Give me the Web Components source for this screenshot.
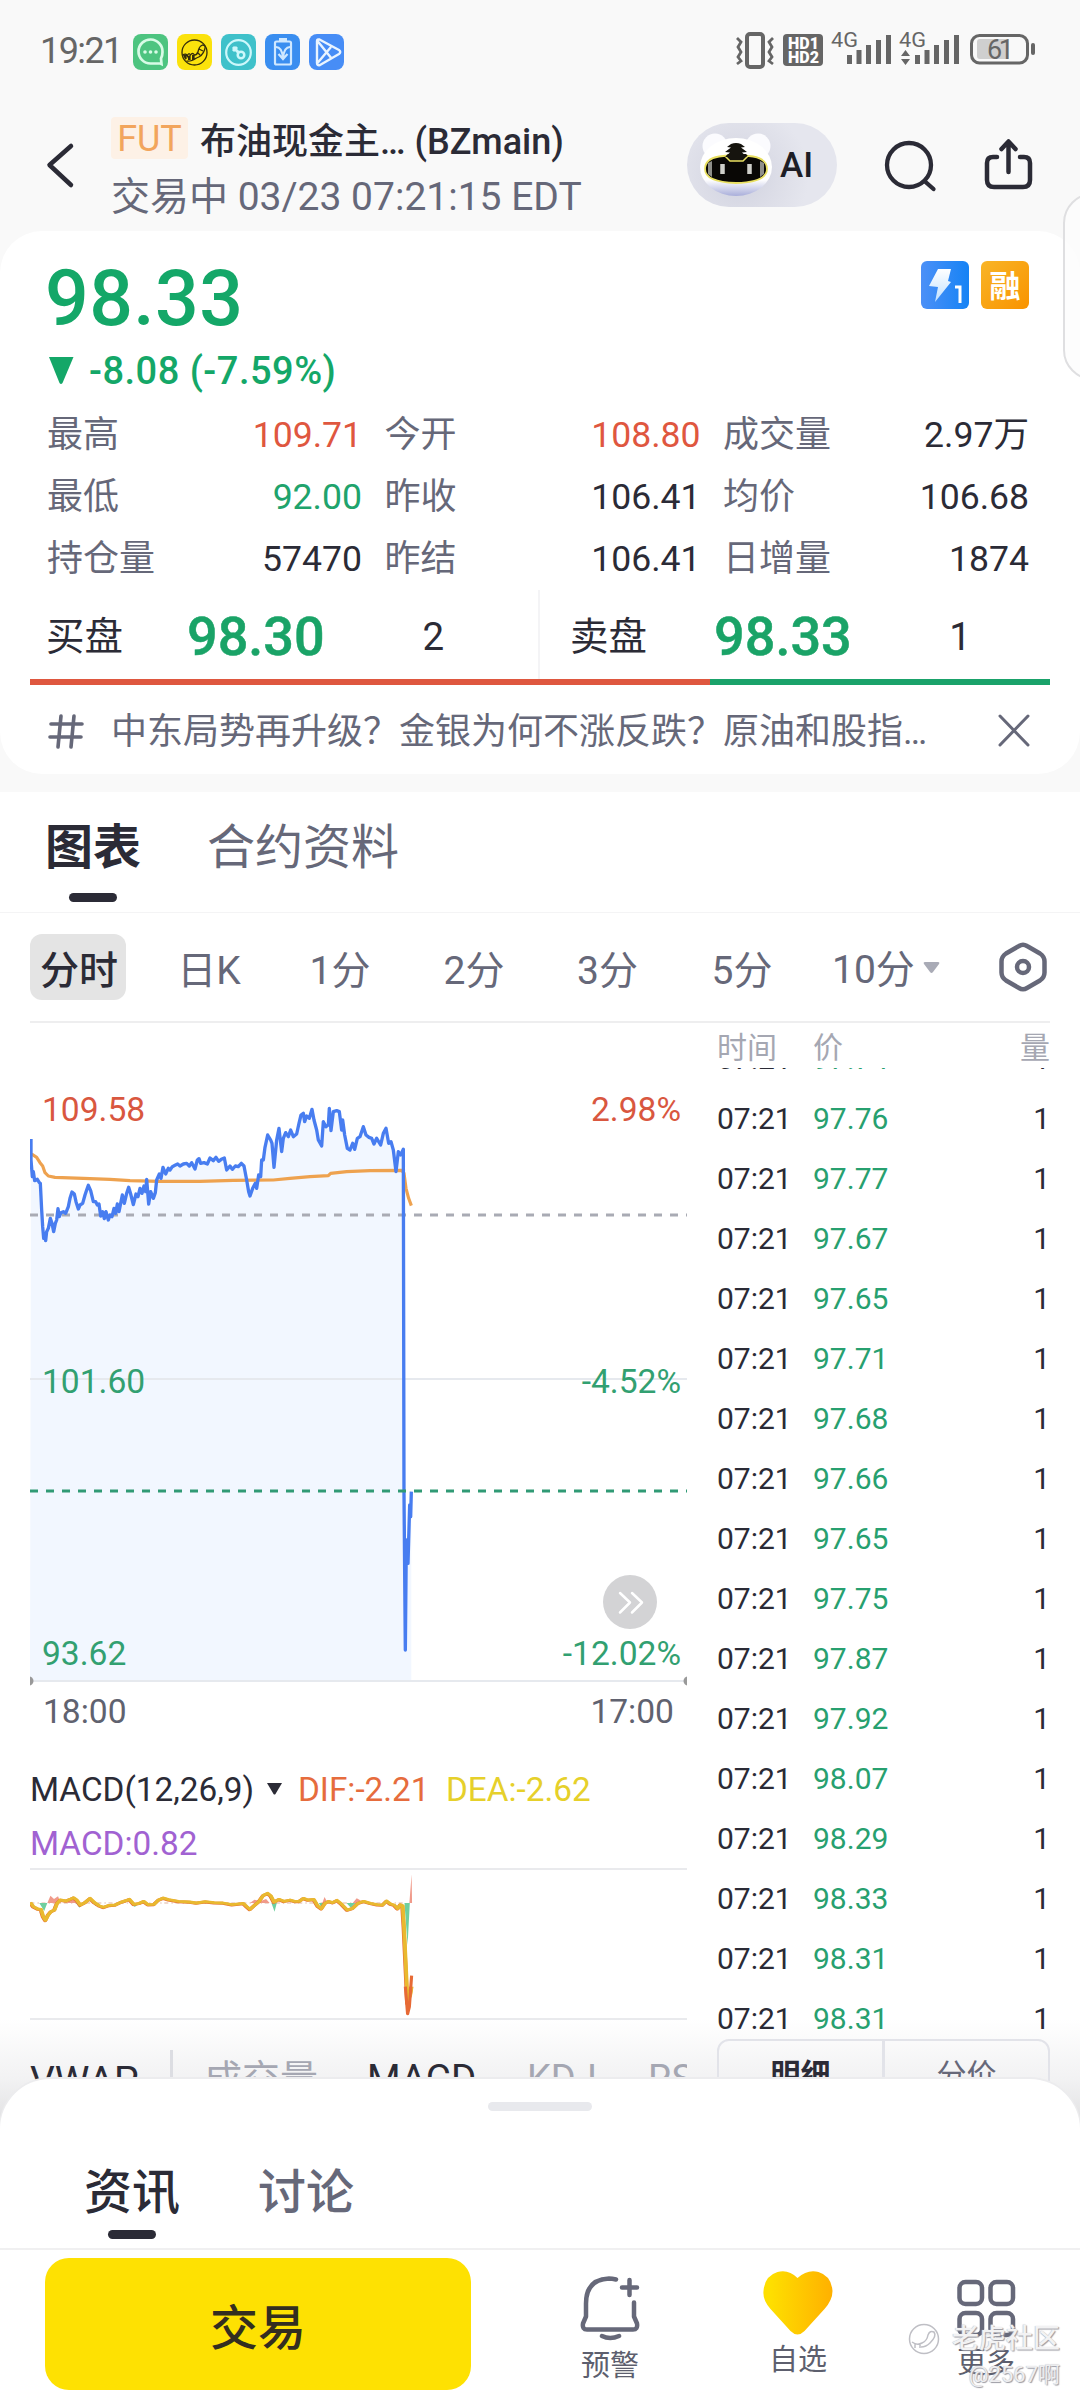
<!DOCTYPE html>
<html lang="zh-CN">
<head>
<meta charset="utf-8">
<title>布油现金主… (BZmain)</title>
<style>
html,body{margin:0;padding:0;background:#fff}
body{width:1080px;height:2400px;overflow:hidden;font-family:Roboto,"Noto Sans CJK SC",sans-serif;color:#2b2b36}
</style>
</head>
<body>
<quote-app></quote-app>
<script>
const define=(name,css,html)=>customElements.define(name,class extends HTMLElement{
  constructor(){
    super();
    const root=this.attachShadow({mode:'open'});
    root.innerHTML=`<style>:host{display:block;box-sizing:border-box}*{box-sizing:border-box}svg{display:block;flex:none}${css}</style>`+(typeof html==='function'?html(this):html);
  }
});

define('status-bar',`
:host{height:100px;display:flex;justify-content:space-between;padding:0 38px 0 40px}
.l{display:flex;padding-top:34px;gap:9px}
.time{font-size:36px;line-height:35px;letter-spacing:-1.6px;color:#666;width:84px;font-weight:400}
.r{margin-top:24px}
text{font-family:Roboto,sans-serif}`,`
<div class="l"><span class="time">19:21</span>
<svg width="35" height="36"><rect width="35" height="36" rx="8" fill="#4dc480"/><path d="M27.5 29.5H17.5A12 12 0 1 1 29.5 18Q29.500 22 28 24.500L28.500 30Z" fill="none" stroke="#d8fbe6" stroke-width="2.700"/><g fill="#d8fbe6"><circle cx="12" cy="18" r="1.800"/><circle cx="17.500" cy="18" r="1.800"/><circle cx="23" cy="18" r="1.800"/></g></svg>
<svg width="35" height="36"><rect width="35" height="36" rx="8" fill="#fbe20c"/><g fill="none" stroke="#342d0c" stroke-width="1.300"><circle cx="17.500" cy="18.500" r="12.500"/><path d="M5.500 21q4-2 5 1 1-4 3-1 2-3 4 0 3 0 4-5 1-4 4-5 4 0 2 5-2 6-8 8-6 4-10 3M9 21v4M13 21v5M17 21v5M20 18l3 3M22 15l4 2"/></g><path d="M6 21h3v5q-2-2-3-5zM11 22h2v4h-2zM15 21h2v5h-2z" fill="#342d0c"/></svg>
<svg width="35" height="36"><rect width="35" height="36" rx="8" fill="#3fc1ca"/><g fill="none" stroke="#cdf8fb" stroke-width="2.200"><circle cx="17.500" cy="18.500" r="12.300"/><circle cx="20" cy="21" r="3.300" stroke-width="2.500"/><path d="M17.500 18.500L12 13M12 17l4-4" stroke-width="3"/></g></svg>
<svg width="35" height="36"><rect width="35" height="36" rx="8" fill="#3a8ef0"/><rect x="10" y="7.500" width="16" height="23" rx="1.500" fill="none" stroke="#cfe8ff" stroke-width="2.200"/><path d="M14 5.500h8" stroke="#cfe8ff" stroke-width="3"/><path d="M11 13q6 0 7 11M25 13q-6 0-7 11M13.500 20l4.500 5 4.500-5" fill="none" stroke="#cfe8ff" stroke-width="2.200"/></svg>
<svg width="35" height="36"><rect width="35" height="36" rx="8" fill="#478df6"/><path d="M8 7q0-2 2.500-1.500L30 16q2.500 2 0 4L11 31q-3 1-3-2ZM8.500 29L22 13M8.500 7L23 25" fill="none" stroke="#eaf4ff" stroke-width="2.400" stroke-linejoin="round"/></svg>
</div>
<svg class="r" width="312" height="50" viewBox="730 24 312 50" fill="#666">
<rect x="747" y="34" width="16" height="33" rx="3" fill="none" stroke="#666" stroke-width="4"/>
<path d="M737 38l4 4-3 5 3 5-3 5 3 4-4 3M773 38l-4 4 3 5-3 5 3 5-3 4 4 3" fill="none" stroke="#666" stroke-width="2.800"/>
<rect x="783" y="34" width="40" height="32" rx="4"/>
<g fill="#fff" font-size="16" font-weight="900"><text x="788" y="49" textLength="31">HD1</text><text x="788" y="63" textLength="31">HD2</text></g>
<text x="831" y="47" font-size="20" textLength="27" lengthAdjust="spacingAndGlyphs">4G</text>
<path d="M847 55h5v9h-5zM856.500 50h5v14h-5zM866 45h5v19h-5zM876 40h5v24h-5zM886 35h5v29h-5z"/>
<text x="899" y="47" font-size="20" textLength="27" lengthAdjust="spacingAndGlyphs">4G</text>
<path d="M905.500 50l4.500 6h-9zM905.500 65l4.500-6h-9z"/>
<path d="M915 55h5v9h-5zM924.500 50h5v14h-5zM934 45h5v19h-5zM944 40h5v24h-5zM954 35h5v29h-5z"/>
<rect x="971.500" y="35.500" width="56" height="27.500" rx="8" fill="none" stroke="#666" stroke-width="3"/>
<path d="M980 39h29v20h-29q-3 0-3-3V42q0-3 3-3z" fill="#cfcfcf"/>
<rect x="1031" y="43" width="4" height="12" rx="2"/>
<text x="987" y="58.500" font-size="27" textLength="27" lengthAdjust="spacing">61</text>
</svg>`);

define('quote-header',`
:host{height:131px;display:flex;position:relative}
.back{margin:40px 0 0 44px}
.info{margin-left:35px;padding-top:17px;width:540px}
.t{display:flex;align-items:center;height:48px;gap:12px;white-space:nowrap}
.fut{width:77px;height:42px;line-height:45px;background:#fdf1e6;border-radius:4px;color:#f2a55c;font-size:36px;text-align:center;margin-top:-6px}
b{font-weight:500;font-size:36px;line-height:48px;padding-top:2px}
.s{font-size:39px;line-height:54px;margin-top:5px;color:#666879;white-space:nowrap}
.ai{width:150px;height:84px;border-radius:42px;margin:23px 0 0 36px;background:radial-gradient(circle at 52px 52px,#cfd1df 0,#dcdde7 38px,#e5e6ee 70px);display:flex;align-items:center;font-size:35px;font-weight:500;color:#1d1d26}
.ai svg{margin:0 7px 0 10px}
.se{margin:39px 0 0 44px}.sh{margin:36px 0 0 43px}`,`
<svg class="back" width="32" height="50" viewBox="44 140 32 50"><path d="M71 146L49.500 165 71 185" fill="none" stroke="#2b2b36" stroke-width="4.500" stroke-linecap="round" stroke-linejoin="round"/></svg>
<div class="info"><div class="t"><span class="fut">FUT</span><b>布油现金主… (BZmain)</b></div><div class="s">交易中 03/23 07:21:15 EDT</div></div>
<div class="ai"><svg width="76" height="70" viewBox="699 130 76 70">
<defs><linearGradient id="h" x1="0" y1="0" x2="0" y2="1"><stop offset=".72" stop-color="#fff"/><stop offset="1" stop-color="#a9aeda"/></linearGradient></defs>
<circle cx="717" cy="146" r="12.500" fill="#fbfbfe"/><circle cx="760" cy="146" r="12.500" fill="#fbfbfe"/>
<ellipse cx="738" cy="167" rx="36" ry="29" fill="url(#h)"/>
<path d="M707 169q0-10 14-12.500 17-2.500 34 0 14 2.500 14 12.500 0 13-31 14-31-1-31-14z" fill="#090705" stroke="#e9e062" stroke-width="1.800"/>
<path d="M728 156l5 5h11l6-5-2-2h-18z" fill="#16140e"/><path d="M727 156l5 5h13l5-5" stroke="#e9e062" stroke-width="1.500" fill="none"/>
<path d="M733 144q5-2 10 0l4 3-4 .5 6 4.500-5 .5 5 4.500h-22l5-4.500-5-.5 6-4.500-4-.5z" fill="#16140e"/>
<path d="M710 163l4-2v16l-4-3zM766 163l-4-2v16l4-3z" fill="#8f8f8a"/>
<path d="M724.500 164v10M751.500 164v10" stroke="#cfcfca" stroke-width="4.500"/></svg>AI</div>
<svg class="se" width="56" height="56" viewBox="881 139 56 56" fill="none" stroke="#2b2b36" stroke-width="4.300" stroke-linecap="round"><circle cx="909" cy="165" r="22"/><path d="M925 181.500l8.500 7.500"/></svg>
<svg class="sh" width="56" height="60" viewBox="980 136 56 60" fill="none" stroke="#2b2b36" stroke-width="4.500" stroke-linecap="round" stroke-linejoin="round"><path d="M997 157h-4q-6 0-6 6v17q0 7 7 7h29q7 0 7-7v-17q0-6-6-6h-4M1008.500 172V142M1001.500 149l7-7.500 7 7.500"/></svg>`);

define('stat-cell',`
:host{display:flex;justify-content:space-between;height:62px;line-height:62px;font-size:36px;color:#2b2b36}
.k{color:#666879}.v{font-size:35.6px}
:host([tone=up]) .v{color:#df573f}:host([tone=down]) .v{color:#20a36c}`,
`<span class="k"><slot name="k"></slot></span><span class="v"><slot></slot></span>`);

define('book-side',`
:host{display:flex;align-items:center;height:89px;line-height:89px;padding-top:3px;font-size:38.500px}
.k{width:var(--kw,144px)}.p{width:138px;font-size:54px;font-weight:500;color:#1aa367;-webkit-text-stroke:.5px #1aa367}.q{width:216px;text-align:center;margin-left:var(--qm,0)}`,
`<span class="k"><slot name="k"></slot></span><span class="p"><slot></slot></span><span class="q"><slot name="q"></slot></span>`);

define('quote-card',`
:host{height:543px;background:#fff;border-radius:42px;padding-top:23px}
.top{display:flex;justify-content:space-between;padding:0 51px 0 45px}
.price{font-size:77px;line-height:91px;font-weight:500;color:#14a768;letter-spacing:.4px}
.tags{display:flex;gap:12px;padding-top:7px}
.chg{display:flex;align-items:center;height:51px;line-height:52px;padding-left:48px;font-size:38px;font-weight:500;color:#14a768;gap:15px;white-space:nowrap;letter-spacing:.5px}
.stats{display:grid;grid-template-columns:315px 316px 1fr;column-gap:22.500px;margin:8px 51px 0 47px}
.book{display:flex}
.book book-side:first-child{width:540px;padding-left:46px;border-right:2px solid #f4f4f6;--kw:145.500px;--qm:4px}
.book book-side:last-child{padding-left:30px}
.bar{display:flex;height:6px;margin:0 30px}.bar i{background:#df573f;width:680px}.bar em{background:#1aa26a;flex:1}
.topic{display:flex;align-items:center;height:89px;padding:2px 48px 0 46px}
.topic span{font-size:36px;line-height:60px;color:#666879;margin-left:25px;flex:1;white-space:nowrap;padding-top:3px}
text{font-family:Roboto,sans-serif}`,`
<div class="top"><span class="price">98.33</span><div class="tags">
<svg width="48" height="48"><defs><linearGradient id="b"><stop stop-color="#4c90f7"/><stop offset="1" stop-color="#1683f5"/></linearGradient><linearGradient id="w" x1="0" y1="0" x2="0" y2="1"><stop stop-color="#fff"/><stop offset="1" stop-color="#bfe0ff"/></linearGradient></defs><rect width="48" height="48" rx="6" fill="url(#b)"/><path d="M17 8h13l-3 12 3 1-16 20 3-15-9-1z" fill="url(#w)"/><path d="M34 26h5v16" fill="none" stroke="#fff" stroke-width="3"/></svg>
<svg width="48" height="48"><defs><linearGradient id="o" x1="0" y1="0" x2="1" y2="1"><stop stop-color="#f9b527"/><stop offset="1" stop-color="#f99300"/></linearGradient></defs><rect width="48" height="48" rx="6" fill="url(#o)"/><text x="24" y="36" font-size="31" font-weight="700" text-anchor="middle" fill="#fff" style="font-family:'Noto Sans CJK SC',sans-serif">融</text></svg></div></div>
<div class="chg"><svg width="26" height="27"><path d="M1 0h24.500L14.500 26q-1.500 2-3 0z" fill="#14a768"/></svg><span>-8.08 (-7.59%)</span></div>
<div class="stats">
<stat-cell tone="up"><span slot="k">最高</span>109.71</stat-cell><stat-cell tone="up"><span slot="k">今开</span>108.80</stat-cell><stat-cell><span slot="k">成交量</span>2.97万</stat-cell>
<stat-cell tone="down"><span slot="k">最低</span>92.00</stat-cell><stat-cell><span slot="k">昨收</span>106.41</stat-cell><stat-cell><span slot="k">均价</span>106.68</stat-cell>
<stat-cell><span slot="k">持仓量</span>57470</stat-cell><stat-cell><span slot="k">昨结</span>106.41</stat-cell><stat-cell><span slot="k">日增量</span>1874</stat-cell></div>
<div class="book"><book-side><span slot="k">买盘</span>98.30<span slot="q">2</span></book-side><book-side><span slot="k">卖盘</span>98.33<span slot="q">1</span></book-side></div>
<div class="bar"><i></i><em></em></div>
<div class="topic"><svg width="40" height="40" viewBox="46 709 40 40" stroke="#666879" stroke-width="3.600" stroke-linecap="round"><path d="M51 722h31M50 735h31M61 714l-3 31M74 714l-3 31"/></svg><span>中东局势再升级？金银为何不涨反跌？原油和股指…</span><svg width="36" height="36" stroke="#666879" stroke-width="3" stroke-linecap="round"><path d="M4 3l28 29M32 3L4 32"/></svg></div>`);

define('tab-item',`
:host{display:flex;flex-direction:column;align-items:center;font-size:48px;line-height:60px;color:#666879}
i{width:48px;height:9px;border-radius:5px;margin-top:var(--gap,15px)}
:host([on]){color:#2b2b36;font-weight:var(--w,700)}
:host([on]) i{background:#2b2b36}`,`<slot></slot><i></i>`);

define('main-tabs',`:host{height:121px;background:#fff;display:flex;gap:66px;padding:26px 45px 0;border-bottom:1px solid #f4f4f5}`,
`<tab-item on>图表</tab-item><tab-item>合约资料</tab-item>`);

define('period-bar',`
:host{height:110px;display:flex;align-items:center;padding:0 31px 2px 12px;font-size:39px;color:#666879;position:relative}
.g{display:grid;grid-template-columns:132px 130px 132px 136px 131px 138px}
.g span{height:66px;line-height:66px;padding-top:4px;text-align:center}
.g span.on{width:96px;justify-self:center;background:#e4e4e4;border-radius:12px;color:#2b2b36;font-weight:500;padding-left:2px}
.m{margin-left:21px;line-height:66px;padding-top:5px;flex:1;display:flex;align-items:center;gap:8px}.m svg{margin-top:-4px}`,`
<div class="g"><span class="on">分时</span><span>日K</span><span>1分</span><span>2分</span><span>3分</span><span>5分</span></div>
<div class="m">10分<svg width="17" height="12"><path d="M2 0h13q2 0 1 2l-6 8q-1.500 2-3 0L1 2q-1-2 1-2z" fill="#a9abb6"/></svg></div>
<svg width="52" height="54" viewBox="997 940 52 54" fill="none" stroke="#666879" stroke-width="4.500" stroke-linejoin="round"><path d="M1019 946q4-2.500 8 0l13 7.500q4.500 3 4.500 8v11q0 5-4.500 8l-13 7.500q-4 2.500-8 0l-13-7.500q-4.500-3-4.500-8v-11q0-5 4.500-8z"/><circle cx="1023" cy="967" r="6"/></svg>`);

const price="93,237 93,300 97,350 100,335 104,362 112,358 118,368 121,370 125,450 128,500 131,535 134,520 137,542 140,515 145,505 151,475 156,490 161,515 166,490 170,480 174,446 178,470 183,458 190,455 197,460 205,440 210,415 216,396 223,402 228,425 235,447 240,435 248,430 255,405 260,390 265,376 272,392 280,425 287,425 292,435 297,432 302,468 308,455 313,476 318,455 325,480 330,465 336,470 342,445 347,460 352,432 357,455 362,430 367,405 373,430 380,400 386,382 392,402 400,434 408,402 414,410 420,385 426,400 432,378 437,395 440,358 446,432 452,395 460,415 466,398 470,360 478,342 483,355 489,322 497,342 505,325 510,330 517,320 525,316 533,312 540,318 550,312 560,310 568,318 575,308 585,327 592,300 597,296 602,310 612,308 622,312 630,294 640,302 648,292 656,304 664,298 673,294 680,330 690,318 697,328 706,318 715,320 724,310 732,318 740,360 746,395 750,408 758,385 766,370 770,385 776,345 782,350 785,300 790,300 795,262 803,225 812,240 816,250 822,322 830,240 837,205 845,275 850,235 857,218 865,230 872,210 880,230 890,222 897,190 903,165 910,160 914,185 920,168 928,175 936,148 942,180 950,210 955,240 965,258 970,185 978,200 985,195 988,145 993,212 1000,155 1010,152 1018,155 1025,210 1028,180 1034,225 1042,265 1050,270 1058,250 1064,268 1072,235 1080,230 1090,200 1098,225 1107,232 1115,235 1122,252 1130,235 1142,255 1150,220 1158,205 1166,250 1173,245 1180,270 1188,335 1195,275 1202,285 1210,268 1212,1300 1216,1770 1219,1440 1224,1510 1229,1335 1232,1370 1234,1295";
const average="95,282 110,292 120,308 128,318 135,338 145,348 165,352 250,355 330,358 390,362 480,364 600,364 700,361 820,360 870,355 930,350 985,347 992,340 1040,335 1110,332 1205,331 1212,340 1218,385 1226,415 1234,437";

define('price-chart',`:host{height:727px}text{font-family:Roboto,sans-serif;font-size:33.6px}`,`
<svg width="657" height="727" viewBox="30 1023 657 727">
<g transform="translate(0 1060) scale(.33333)"><polygon points="90,1863 ${price} 1234,1863" fill="#f2f7ff"/></g>
<path d="M30 1379h657M30 1681h657" stroke="#e6e9ee" stroke-width="2"/>
<path d="M30 1215h657" stroke="#a9abb4" stroke-width="3.200" stroke-dasharray="8 8"/>
<g transform="translate(0 1060) scale(.33333)" fill="none" stroke-linejoin="round"><polyline points="${average}" stroke="#eea24f" stroke-width="9.500"/><polyline points="${price}" stroke="#487df0" stroke-width="10"/></g>
<path d="M30 1491h657" stroke="#309a75" stroke-width="3.200" stroke-dasharray="8 8"/>
<circle cx="29" cy="1681" r="4.500" fill="#999"/><circle cx="688" cy="1681" r="4.500" fill="#999"/>
<circle cx="630" cy="1602" r="27" fill="#d3d3d5"/><path d="M620 1593l10 9.500-10 10M632 1593l10 9.500-10 10" fill="none" stroke="#fff" stroke-width="2.500" stroke-linecap="round" stroke-linejoin="round"/>
<g fill="#d9573f"><text x="42" y="1121">109.58</text><text x="681" y="1121" text-anchor="end">2.98%</text></g>
<g fill="#32a071"><text x="42" y="1393">101.60</text><text x="681" y="1393" text-anchor="end">-4.52%</text><text x="42" y="1665">93.62</text><text x="681" y="1665" text-anchor="end">-12.02%</text></g>
<g fill="#60626f"><text x="43" y="1723">18:00</text><text x="674" y="1723" text-anchor="end">17:00</text></g>
</svg>`);

const dea="68,487 75,500 85,507 92,508 97,530 102,541 108,525 114,515 122,510 128,490 135,480 148,483 157,478 165,473 172,480 180,495 190,488 202,475 212,488 222,497 232,502 245,496 258,495 270,487 282,482 290,478 300,493 312,490 322,484 332,494 345,493 355,480 366,474 378,479 400,484 425,486 440,489 460,485 480,488 500,489 520,494 545,490 553,500 560,508 570,496 580,485 590,466 600,460 607,468 614,486 625,478 636,484 650,480 660,484 670,484 680,475 690,480 703,478 712,498 720,506 728,490 736,484 745,488 755,481 765,492 778,510 790,505 802,490 815,484 830,490 845,494 857,495 866,483 875,492 883,495 891,506 897,494 902,497 905,560 910,700 913,790 916,775 919,765 922,740";
define('macd-panel',`
:host{height:267px;font-size:33.3px}
.h{display:flex;flex-wrap:wrap;line-height:54px;padding-top:13px;width:657px;height:118px;white-space:nowrap;align-content:flex-start}
.n{display:flex;align-items:center;margin-right:15px;width:253px;justify-content:space-between;color:#2b2b36}.n svg{margin-top:-3px}`,`
<div class="h"><span class="n">MACD(12,26,9)<svg width="17" height="12"><path d="M1 0h15L9.500 11q-1 1-2 0z" fill="#2b2b36"/></svg></span><span style="color:#e66c3d;width:148px">DIF:-2.21</span><span style="color:#e6d02a;width:200px">DEA:-2.62</span><span style="color:#a162d2">MACD:0.82</span></div>
<svg width="657" height="153" viewBox="30 1868 657 153"><path d="M30 1869h657M30 2019h657" stroke="#e9eaed" stroke-width="2"/>
<g transform="translate(0 1740) scale(.446429 .333333)">
<path d="M68 489H905" stroke="#dfb3a0" stroke-width="3" stroke-dasharray="9 7 3 6"/>
<path d="M88 489h18l-7 24zM170 489h16l-8 14zM208 489h14l-7 10zM292 489h20l-10 12zM608 489h12l-5 26zM714 489h14l-7 16zM776 489h20l-10 14zM906 489h12l-5 126z" fill="#6fcf9f"/>
<path d="M106 489l7-22 8 10 9-8 6 20zM150 489l12-15 10 15zM560 489l10-10 14 4 12-6 8 12zM722 489l5-18 7 18zM790 489l9-14 8 6 6 8zM917 489l5-86 1 86z" fill="#f09a8a"/>
</g>
<g transform="translate(0 1740) scale(.446429 .333333)" fill="none" stroke-linejoin="round"><polyline points="${dea}" stroke="#e76a35" stroke-width="9" transform="translate(-1 1)"/><polyline points="${dea}" stroke="#e9b92f" stroke-width="8.500"/><polyline points="908,740 913,822 917,800 922,707" stroke="#e76a35" stroke-width="7"/></g></svg>`);

define('indicator-tabs',`
:host{height:113px;display:flex;align-items:flex-start;width:657px;overflow:hidden;font-size:38px;line-height:44px;color:#a5a7b2;white-space:nowrap;padding-top:40px}
b{font-weight:400;color:#2b2b36}
i{width:3px;height:44px;background:#dcdde2;margin:-7px 31px 0 30px;flex:none}
span,b{flex:none}`,`
<b style="width:110px;padding-top:2px;font-size:39px">VWAP</b><i></i><span style="width:163px">成交量</span><b style="width:160px;font-size:38.500px">MACD</b><span style="width:121px">KDJ</span><span>RSI</span>`);

define('tick-row',`
:host{display:flex;height:60px;line-height:60px;font-size:30px;color:#2b2b36}
.t{width:96px}.p{flex:1;color:#27a06f}`,
e=>`<span class="t">07:21</span><span class="p">${e.getAttribute('p')}</span><span>1</span>`);

define('tick-list',`
:host{width:333px;display:flex;flex-direction:column}
.h{height:45px;line-height:50px;font-size:30px;color:#a5a7b2;display:flex}
.h span{width:96px}.h span:last-child{width:auto;margin-left:auto}
.l{height:971px;overflow:hidden}.in{margin-top:-39px}
.b{flex:1;border:2px solid #e2e3e9;border-radius:12px 12px 0 0;display:flex;font-size:30px;line-height:60px;text-align:center;color:#666879}
.b span{flex:1;padding-top:4px}.b .on{font-weight:700;color:#2b2b36;border-right:3px solid #e2e3e9}`,`
<div class="h"><span>时间</span><span>价</span><span>量</span></div>
<div class="l"><div class="in">${'97.74 97.76 97.77 97.67 97.65 97.71 97.68 97.66 97.65 97.75 97.87 97.92 98.07 98.29 98.33 98.31 98.31'.split(' ').map(p=>`<tick-row p="${p}"></tick-row>`).join('')}</div></div>
<div class="b"><span class="on">明细</span><span>分价</span></div>`);

define('chart-body',`
:host{height:1107px;display:flex;padding:0 30px;justify-content:space-between;background:linear-gradient(#fff 0 996px,#f2f2f3 1056px,#dedee0 1107px)}
.l{width:657px}`,`<div class="l"><price-chart></price-chart><macd-panel></macd-panel><indicator-tabs></indicator-tabs></div><tick-list></tick-list>`);

define('news-sheet',`
:host{height:169px;margin-top:-51px;padding-top:23px;background:#fff;border-radius:50px 50px 0 0;box-shadow:0 -1px 0 1px #ececee;position:relative}
.g{width:104px;height:9px;border-radius:5px;background:#e8e9ed;margin:0 auto}
.t{display:flex;gap:78px;padding:52px 84px 0;--gap:7px;--w:500}
.t tab-item:last-child{font-weight:500}`,`<div class="g"></div><div class="t"><tab-item on>资讯</tab-item><tab-item>讨论</tab-item></div>`);

define('action-item',`
:host{width:188px;display:flex;flex-direction:column;align-items:center;font-size:29px;line-height:40px;color:#5d5f6e}
::slotted(svg){display:block}`,`<slot name="icon"></slot><slot></slot>`);

define('action-bar',`
:host{height:152px;background:#fff;border-top:2px solid #f0f0f1;display:flex;position:relative}
.trade{width:426px;height:132px;margin:8px 45px 0;border-radius:24px;background:#fee102;font-size:48px;font-weight:500;line-height:132px;padding-top:5px;text-align:center;color:#332e20}
action-item{padding-top:var(--p,22px)}
.wm{position:absolute;right:20px;top:71px;color:#f2f2f3;text-shadow:1px 1px 1px #9a9aa2,-.5px -.5px 1px #c0c0c6;text-align:right;white-space:nowrap}
.wm div{display:flex;align-items:center;gap:12px;font-size:27px;line-height:36px;font-weight:500}
.wm p{margin:0;font-size:22px;line-height:36px;color:#eeeef0}`,`
<div class="trade">交易</div>
<action-item style="--p:22px"><svg slot="icon" width="64" height="74" viewBox="578 2272 64 74" fill="none" stroke="#666879" stroke-width="4.500" stroke-linecap="round" stroke-linejoin="round"><path d="M616 2279.500q-4-1-7-1-23 1-23 25v13l-3 7q-1 6 4 6h46q5 0 4-6l-3-7v-14M629.500 2280v15M622 2287.500h15M602 2336q8 4 17 0"/></svg>预警</action-item>
<action-item style="--p:17px"><svg slot="icon" width="74" height="73" viewBox="761 2267 74 73"><defs><linearGradient id="h"><stop offset=".1" stop-color="#fedf00"/><stop offset="1" stop-color="#ffb000"/></linearGradient></defs><path d="M797.500 2278q10-9 21-6 13 4 14 19 0 9-8 18l-20 22q-7 7-14 0l-20-22q-8-9-7-18 1-15 14-19 11-3 20 6z" fill="url(#h)"/></svg>自选</action-item>
<action-item style="--p:24px"><svg slot="icon" width="62" height="69" viewBox="955 2275 62 69" fill="none" stroke="#666879" stroke-width="4.500"><rect x="959.500" y="2283" width="22.500" height="22" rx="6"/><rect x="990.500" y="2283" width="22.500" height="22" rx="6"/><rect x="959.500" y="2314" width="22.500" height="22" rx="6"/><rect x="990.500" y="2314" width="22.500" height="22" rx="6"/></svg>更多</action-item>
<div class="wm"><div><svg width="32" height="32" fill="none" stroke="#bfbfc5" stroke-width="1.500"><circle cx="16" cy="16" r="14.500"/><path d="M4 19q5 4 10 1 5-2 6-8 2-5 6-3 3 4-4 11-4 4-9 4M7 20v5M12 20v5"/></svg>老虎社区</div><p>@2567啊</p></div>`);

define('edge-handle',`:host{position:absolute;left:1063px;top:193px;width:60px;height:187px;border:2px solid #dfdfe1;border-radius:34px;background:#fdfdfdcc}`,``);

define('quote-app',`
:host{width:1080px;height:2400px;overflow:hidden;position:relative}
.head{background:#f9f9f9;padding-bottom:18px}
.rule{height:2px;background:#eeeeef;margin:-2px 30px 0}`,`
<div class="head"><status-bar></status-bar><quote-header></quote-header><quote-card></quote-card></div>
<main-tabs></main-tabs><period-bar></period-bar><div class="rule"></div><chart-body></chart-body><news-sheet></news-sheet><action-bar></action-bar><edge-handle></edge-handle>`);
</script>
</body>
</html>
